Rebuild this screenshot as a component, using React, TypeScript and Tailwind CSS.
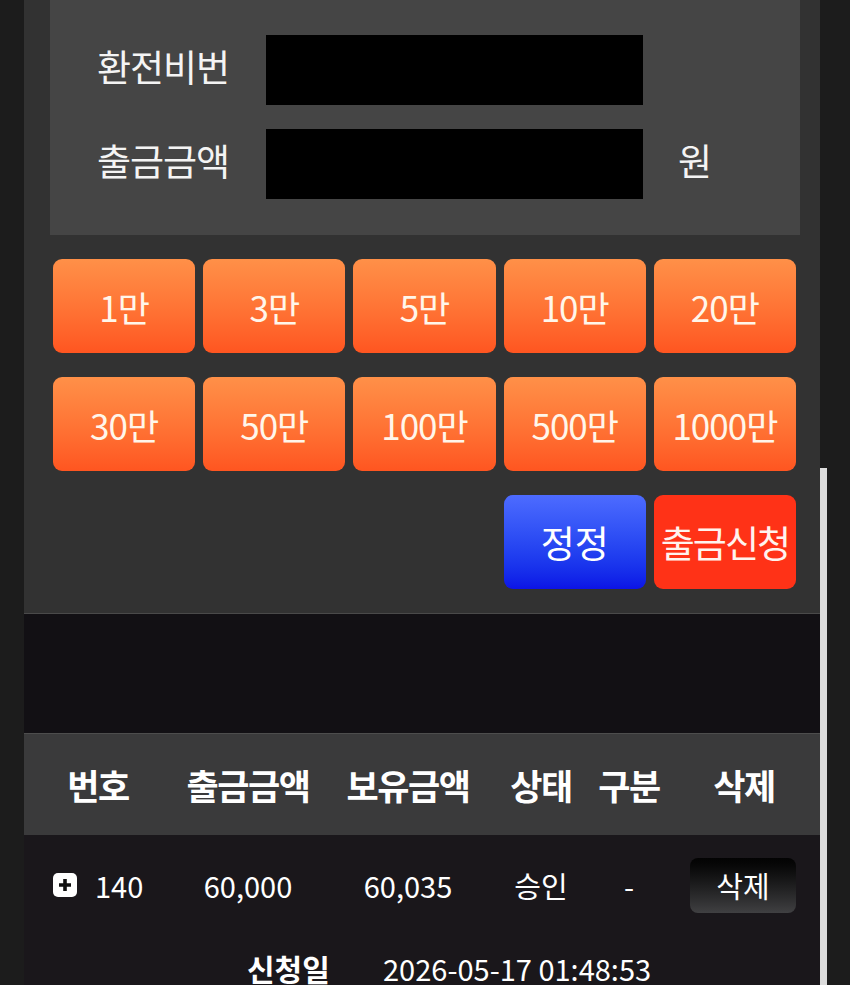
const font = { fontFamily: '"Noto Sans CJK KR", "Noto Sans", sans-serif' }

const amounts = ["1만", "3만", "5만", "10만", "20만", "30만", "50만", "100만", "500만", "1000만"]

function OrangeButton({ label }: { label: string }) {
  return (
    <button className="flex h-[94px] items-center justify-center rounded-[9px] bg-gradient-to-b from-[#ff9048] to-[#ff5520] text-[35px] leading-none tracking-[-1px] text-[#fff6ea]">
      {label}
    </button>
  )
}

function PlusIcon() {
  return (
    <span className="flex h-[24px] w-[24px] items-center justify-center rounded-[5px] bg-white">
      <svg width="14" height="14" viewBox="0 0 14 14">
        <path d="M5.2 1h3.6v4.2H13v3.6H8.8V13H5.2V8.8H1V5.2h4.2z" fill="#111" />
      </svg>
    </span>
  )
}

export default function App() {
  return (
    <div className="relative min-h-[985px] w-[850px] overflow-hidden bg-[#1c1c1c] text-white" style={font}>
      <div className="ml-[24px] w-[796px]">
        {/* form */}
        <div className="border-b border-[#4a4a4a] bg-[#323232] pb-[24px]">
          <div className="ml-[26px] mr-[20px] bg-[#454545] pb-[36px] pt-[35px]">
            <div className="flex items-center">
              <div className="ml-[47px] w-[169px] pb-[8px] text-[37px] leading-none tracking-[-1px] text-[#f4f4f4]">환전비번</div>
              <div className="h-[70px] w-[377px] bg-black" />
            </div>
            <div className="mt-[24px] flex items-center">
              <div className="ml-[47px] w-[169px] pb-[8px] text-[37px] leading-none tracking-[-1px] text-[#f4f4f4]">출금금액</div>
              <div className="h-[70px] w-[377px] bg-black" />
              <div className="ml-[35px] pb-[8px] text-[37px] leading-none text-[#f4f4f4]">원</div>
            </div>
          </div>

          <div className="ml-[29px] mr-[24px] mt-[24px] grid grid-cols-5 gap-x-[8px] gap-y-[24px]">
            {amounts.map((a) => (
              <OrangeButton key={a} label={a} />
            ))}
            <div className="col-span-3" />
            <button className="flex h-[94px] items-center justify-center rounded-[9px] bg-gradient-to-b from-[#4d6bff] to-[#0d12e6] text-[37px] leading-none text-white">
              정정
            </button>
            <button className="flex h-[94px] items-center justify-center rounded-[9px] bg-[#ff3217] text-[37px] leading-none tracking-[-2px] text-[#fff3ee]">
              출금신청
            </button>
          </div>
        </div>

        <div className="h-[119px] bg-[#121014]" />

        {/* history table */}
        <div className="border-t border-[#4d4d4d]">
          <div className="grid h-[101px] grid-cols-[148px_152px_168px_98px_78px_152px] items-center bg-[#3a3a3b] text-center text-[35px] font-bold leading-none tracking-[-1.5px]">
            <div>번호</div>
            <div>출금금액</div>
            <div>보유금액</div>
            <div>상태</div>
            <div>구분</div>
            <div>삭제</div>
          </div>
          <div className="h-[200px] bg-[#1a171b]">
            <div className="grid h-[100px] grid-cols-[148px_152px_168px_98px_78px_152px] items-center text-center text-[29px] leading-none">
              <div className="flex items-center pl-[29px]">
                <PlusIcon />
                <span className="ml-[18px]">140</span>
              </div>
              <div>60,000</div>
              <div>60,035</div>
              <div>승인</div>
              <div>-</div>
              <div className="flex justify-center pr-[2px]">
                <button className="flex h-[55px] w-[106px] items-center justify-center rounded-[8px] bg-gradient-to-b from-[#030303] to-[#404042] text-[29px] leading-none">
                  삭제
                </button>
              </div>
            </div>
            <div className="mt-[-2px] flex h-[70px] items-center text-[29px] leading-none">
              <span className="ml-[223px] w-[136px] text-[30px] font-bold">신청일</span>
              <span>2026-05-17 01:48:53</span>
            </div>
          </div>
        </div>
      </div>

      {/* scrollbar */}
      <div className="absolute left-[820px] top-[468px] h-[517px] w-[7px] bg-[#dcdcdc]" />
    </div>
  )
}
